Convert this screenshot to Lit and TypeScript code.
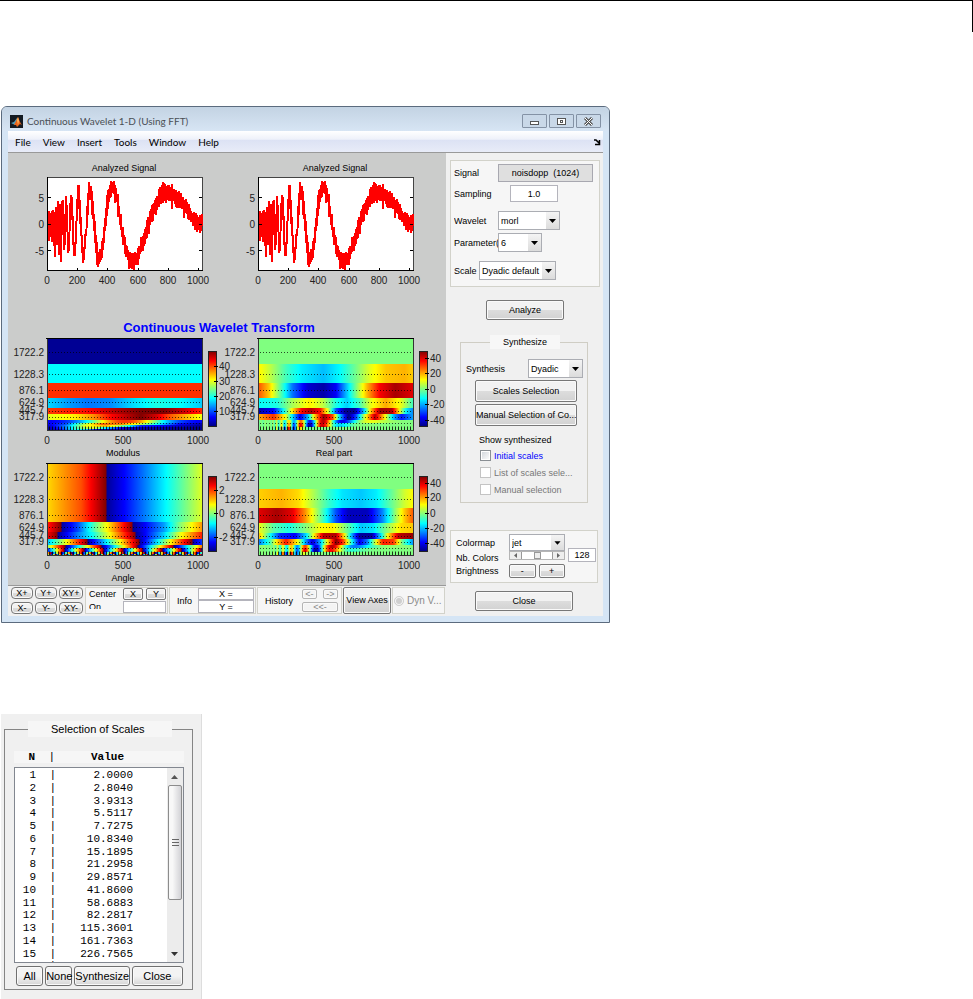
import { LitElement, html, svg, css } from "lit";
import { customElement, property } from "lit/decorators.js";

type Row = { y: number; h: number; at: (t: number) => number };

/** Jet colour map, v in 0..1. */
function jet(v: number): string {
  const ch = (c: number) =>
    Math.round(255 * Math.max(0, Math.min(1, 1.5 - Math.abs(4 * v - c))));
  return `rgb(${ch(3)},${ch(2)},${ch(1)})`;
}

/** Linear interpolation over a flat list of position, value pairs. */
function ramp(...p: number[]) {
  return (t: number) => {
    for (let i = 2; i < p.length; i += 2) {
      if (t <= p[i]) {
        const span = p[i] - p[i - 2];
        return span ? p[i - 1] + ((t - p[i - 2]) / span) * (p[i + 1] - p[i - 1]) : p[i + 1];
      }
    }
    return p[p.length - 1];
  };
}

const bump = (c: number, w: number) => (t: number) => Math.exp(-(((t - c) / w) ** 2));
const phase = (t: number) => (2 * Math.PI * 1.05) / (t + 0.05);
const A7 = bump(0.5, 0.25);
const saw = (n: number, o: number) => (t: number) => (t * n + o) % 1;

const modulus: Row[] = [
  { y: 2, h: 26, at: () => 0.02 },
  { y: 28, h: 19, at: () => 0.375 },
  { y: 47, h: 15, at: () => 0.83 },
  { y: 62, h: 10, at: ramp(0, 0.34, 0.13, 0.28, 0.26, 0.24, 0.4, 0.26, 0.55, 0.34, 0.7, 0.4, 0.85, 0.38, 1, 0.32) },
  { y: 72, h: 6, at: ramp(0, 0.82, 0.25, 0.86, 0.45, 0.95, 0.6, 1, 0.75, 1, 0.88, 0.92, 1, 0.83) },
  { y: 78, h: 6, at: ramp(0, 0.6, 0.18, 0.64, 0.3, 0.74, 0.42, 0.88, 0.6, 1, 0.7, 0.92, 0.8, 0.78, 0.92, 0.67, 1, 0.6) },
  { y: 84, h: 3, at: (t) => 0.1 + 0.72 * A7(t) },
  { y: 87, h: 2, at: ramp(0, 0.1, 0.12, 0.2, 0.22, 0.5, 0.35, 0.78, 0.48, 0.74, 0.6, 0.56, 0.75, 0.3, 0.85, 0.12, 1, 0.04) },
  { y: 89, h: 2, at: ramp(0, 0.06, 0.12, 0.25, 0.24, 0.6, 0.38, 0.7, 0.5, 0.45, 0.6, 0.16, 1, 0.02) },
  { y: 91, h: 2, at: ramp(0, 0.03, 0.1, 0.2, 0.2, 0.48, 0.3, 0.6, 0.38, 0.34, 0.5, 0.06, 1, 0.01) },
  { y: 93, h: 2, at: ramp(0, 0.03, 0.08, 0.1, 0.18, 0.4, 0.26, 0.3, 0.34, 0.04, 1, 0.01) },
];

const real: Row[] = [
  { y: 2, h: 26, at: () => 0.5 },
  { y: 28, h: 19, at: ramp(0, 0.64, 0.08, 0.56, 0.18, 0.44, 0.28, 0.36, 0.42, 0.31, 0.52, 0.37, 0.62, 0.48, 0.72, 0.6, 0.82, 0.68, 0.94, 0.7, 1, 0.67) },
  { y: 47, h: 15, at: ramp(0, 0.8, 0.07, 0.68, 0.15, 0.45, 0.22, 0.24, 0.32, 0.08, 0.42, 0.04, 0.5, 0.12, 0.57, 0.32, 0.64, 0.53, 0.7, 0.7, 0.78, 0.88, 0.88, 0.96, 1, 0.9) },
  { y: 62, h: 10, at: ramp(0, 0.38, 0.12, 0.4, 0.22, 0.54, 0.33, 0.64, 0.42, 0.56, 0.5, 0.4, 0.57, 0.33, 0.65, 0.44, 0.72, 0.6, 0.82, 0.71, 0.92, 0.6, 1, 0.42) },
  { y: 72, h: 6, at: ramp(0, 0.04, 0.1, 0.12, 0.16, 0.36, 0.22, 0.64, 0.28, 0.88, 0.34, 0.95, 0.4, 0.86, 0.45, 0.58, 0.5, 0.2, 0.56, 0.02, 0.62, 0.02, 0.68, 0.32, 0.72, 0.66, 0.78, 0.97, 0.86, 0.95, 0.91, 0.6, 0.95, 0.36, 1, 0.24) },
  { y: 78, h: 6, at: ramp(0, 0.7, 0.1, 0.83, 0.18, 0.6, 0.22, 0.35, 0.27, 0.1, 0.32, 0.3, 0.36, 0.65, 0.42, 0.98, 0.48, 0.8, 0.52, 0.35, 0.58, 0, 0.63, 0.2, 0.68, 0.55, 0.75, 0.95, 0.82, 0.6, 0.87, 0.3, 0.92, 0.14, 1, 0.3) },
  { y: 84, h: 3, at: (t) => 0.5 + 0.45 * bump(0.45, 0.25)(t) * Math.sin(phase(t)) },
  { y: 87, h: 4, at: (t) => 0.5 + 0.48 * bump(0.35, 0.18)(t) * Math.sin(phase(t)) },
  { y: 91, h: 4, at: (t) => 0.5 + 0.42 * bump(0.2, 0.08)(t) * Math.sin(phase(t)) },
];

const imaginary: Row[] = [
  { y: 2, h: 26, at: () => 0.5 },
  { y: 28, h: 19, at: ramp(0, 0.67, 0.15, 0.7, 0.26, 0.66, 0.36, 0.54, 0.45, 0.43, 0.54, 0.35, 0.66, 0.32, 0.76, 0.36, 0.86, 0.48, 0.94, 0.58, 1, 0.63) },
  { y: 47, h: 15, at: ramp(0, 0.9, 0.12, 0.96, 0.22, 0.9, 0.3, 0.74, 0.37, 0.56, 0.44, 0.38, 0.5, 0.2, 0.58, 0.06, 0.7, 0.06, 0.8, 0.26, 0.88, 0.52, 0.94, 0.68, 1, 0.8) },
  { y: 62, h: 10, at: ramp(0, 0.62, 0.1, 0.46, 0.2, 0.4, 0.3, 0.5, 0.4, 0.62, 0.48, 0.64, 0.56, 0.5, 0.66, 0.32, 0.74, 0.35, 0.82, 0.5, 0.92, 0.66, 1, 0.68) },
  { y: 72, h: 6, at: ramp(0, 0.72, 0.07, 0.42, 0.14, 0.16, 0.24, 0.12, 0.31, 0.35, 0.36, 0.64, 0.42, 0.94, 0.5, 0.95, 0.55, 0.66, 0.6, 0.3, 0.65, 0.03, 0.73, 0.03, 0.79, 0.36, 0.83, 0.62, 0.9, 0.94, 1, 0.98) },
  { y: 78, h: 6, at: ramp(0, 0.22, 0.08, 0.45, 0.12, 0.65, 0.18, 0.85, 0.26, 0.6, 0.3, 0.3, 0.35, 0.08, 0.4, 0.3, 0.44, 0.6, 0.5, 1, 0.55, 0.8, 0.6, 0.4, 0.65, 0.1, 0.7, 0.24, 0.74, 0.5, 0.8, 0.85, 0.87, 0.82, 0.92, 0.5, 1, 0.25) },
  { y: 84, h: 3, at: (t) => 0.5 + 0.45 * bump(0.45, 0.25)(t) * Math.cos(phase(t)) },
  { y: 87, h: 4, at: (t) => 0.5 + 0.48 * bump(0.38, 0.18)(t) * Math.cos(phase(t)) },
  { y: 91, h: 4, at: (t) => 0.5 + 0.42 * bump(0.2, 0.08)(t) * Math.cos(phase(t)) },
];

const angle: Row[] = [
  { y: 2, h: 59, at: ramp(0, 0.66, 0.22, 0.8, 0.38, 1, 0.38, 0.02, 0.5, 0.13, 0.75, 0.36, 1, 0.6) },
  { y: 61, h: 10, at: ramp(0, 0.84, 0.09, 1, 0.09, 0.02, 0.2, 0.2, 0.3, 0.45, 0.4, 0.66, 0.55, 1, 0.55, 0.02, 0.75, 0.28, 0.85, 0.5, 1, 0.74) },
  { y: 71, h: 7, at: ramp(0, 0.88, 0.07, 1, 0.07, 0.02, 0.2, 0.25, 0.3, 0.4, 0.4, 0.62, 0.57, 1, 0.57, 0.02, 0.75, 0.33, 0.85, 0.6, 1, 0.86) },
  { y: 78, h: 6, at: ramp(0, 0.3, 0.1, 0.55, 0.26, 1, 0.26, 0.02, 0.36, 0.3, 0.46, 0.6, 0.59, 1, 0.59, 0.02, 0.7, 0.33, 0.8, 0.65, 0.93, 1, 0.93, 0.02, 1, 0.2) },
  { y: 84, h: 3, at: saw(4.3, 0.5) },
  { y: 87, h: 4, at: saw(8, 0.1) },
  { y: 91, h: 2, at: saw(15, 0.6) },
  { y: 93, h: 2, at: saw(29, 0.3) },
];

const scaleLabels: [string, number][] = [
  ["1722.2", 16], ["1228.3", 38], ["876.1", 54], ["624.9", 66], ["445.7", 74], ["317.9", 80],
];

const plotText = css`
  :host {
    display: block;
    font-family: "Liberation Sans", Arial, sans-serif;
  }
  svg {
    display: block;
    width: 100%;
    overflow: visible;
  }
  .tick {
    font-size: 10px;
    fill: #222;
  }
  .caption {
    font-size: 9px;
    fill: #000;
  }
  .end {
    text-anchor: end;
  }
  .mid {
    text-anchor: middle;
  }
`;

@customElement("signal-plot")
export class SignalPlot extends LitElement {
  static styles = plotText;

  private trace(): string {
    let seed = 20;
    const rnd = () => {
      seed = (seed * 16807) % 2147483647;
      return seed / 2147483647;
    };
    const pts: string[] = [];
    for (let i = 0; i < 1024; i++) {
      const t = i / 1024;
      const noise = (rnd() + rnd() + rnd() + rnd() - 2) * (t < 0.1 ? 2.8 : 1.5);
      const v = 14.6 * Math.sqrt(t * (1 - t)) * Math.sin(phase(t)) + noise;
      const y = Math.max(24, Math.min(116, 70.5 - v * 5.3));
      pts.push(`${(40 + t * 154).toFixed(1)},${y.toFixed(1)}`);
    }
    return pts.join(" ");
  }

  render() {
    return html`<svg viewBox="0 0 211 151" role="img" aria-label="Analyzed signal">
      <text class="caption mid" x="116" y="17">Analyzed Signal</text>
      <rect x="39.5" y="23.5" width="155" height="93" fill="#fff" stroke="#444" />
      <polyline points=${this.trace()} fill="none" stroke="#f00" stroke-width="2" shape-rendering="crispEdges" />
      <path d="M39.5 23V117M39 116.5H195" stroke="#000" fill="none" />
      <path d="M40 43.5h3M40 70.5h3M40 96.5h3M194 43.5h-3M194 70.5h-3M194 96.5h-3M69.5 116v-2M99.5 116v-2M130.5 116v-2M160.5 116v-2M190.5 116v-2" stroke="#000" />
      <text class="tick end" x="36" y="48">5</text>
      <text class="tick end" x="36" y="74">0</text>
      <text class="tick end" x="36" y="101">-5</text>
      ${[0, 200, 400, 600, 800, 1000].map(
        (v) => svg`<text class="tick mid" x=${39 + Math.round(v * 0.151)} y="130">${v}</text>`
      )}
    </svg>`;
  }
}

@customElement("scalogram-plot")
export class ScalogramPlot extends LitElement {
  static styles = plotText;

  @property() name = "";
  @property({ attribute: false }) rows: Row[] = [];
  @property({ attribute: false }) bar: [string, number][] = [];

  render() {
    const steps = Array.from({ length: 157 }, (_, i) => i / 156);
    return html`<svg viewBox="0 0 211 124" role="img" aria-label=${this.name}>
      <defs>
        ${this.rows.map(
          (r, i) => svg`<linearGradient id=${"row" + i}>${steps.map(
            (t) => svg`<stop offset=${t} stop-color=${jet(r.at(t))}></stop>`
          )}</linearGradient>`
        )}
        <linearGradient id="bar" x1="0" y1="1" x2="0" y2="0">
          ${Array.from({ length: 17 }, (_, i) => svg`<stop offset=${i / 16} stop-color=${jet(i / 16)}></stop>`)}
        </linearGradient>
      </defs>
      ${this.rows.map(
        (r, i) => svg`<rect x="39" y=${r.y} width="156" height=${r.h} fill=${`url(#row${i})`} shape-rendering="crispEdges" />`
      )}
      ${[16, 38, 54, 66, 75, 81, 87].map(
        (y) => svg`<path d=${`M41 ${y}.5H194`} stroke="#000" stroke-opacity="0.7" stroke-dasharray="1 2" />`
      )}
      <path d="M41 92.5H194" stroke="#000" stroke-width="4" stroke-opacity="0.8" stroke-dasharray="1 2" />
      <rect x="39.5" y="2.5" width="155" height="92" fill="none" stroke="#333" />
      <path d="M38 2.5H195" stroke="#000" />
      <rect x="200.5" y="15.5" width="8" height="75" fill="url(#bar)" stroke="#222" />
      ${scaleLabels.map(([s, y]) => svg`<text class="tick end" x="36" y=${y + 4}>${s}</text>`)}
      <text class="tick mid" x="39" y="108">0</text>
      <text class="tick mid" x="115" y="108">500</text>
      <text class="tick mid" x="190" y="108">1000</text>
      <text class="caption mid" x="115" y="120">${this.name}</text>
      ${this.bar.map(([s, y]) => svg`<path d=${`M206 ${y}.5h4`} stroke="#000" /><text class="tick" x="211" y=${y + 4}>${s}</text>`)}
    </svg>`;
  }
}

@customElement("drop-down")
export class DropDown extends LitElement {
  static styles = css`
    :host {
      display: grid;
      border: 1px solid #abadb3;
      background: #fff;
      height: 19px;
      box-sizing: border-box;
    }
    select {
      grid-area: 1 / 1;
      appearance: none;
      border: 0;
      margin: 0;
      padding: 0 0 0 2px;
      background: none;
      min-width: 0;
      width: 100%;
      color: #000;
      font: 9px "Liberation Sans", Arial, sans-serif;
    }
    svg {
      grid-area: 1 / 1;
      justify-self: end;
      align-self: stretch;
      width: 13px;
      height: 100%;
      background: linear-gradient(#f4f4f4, #dcdcdc);
      pointer-events: none;
    }
  `;
  @property() value = "";
  @property() label = "";
  render() {
    return html`<select aria-label=${this.label}><option>${this.value}</option></select>
      <svg viewBox="0 0 13 17"><path d="M3 7h7L6.500 11z" /></svg>`;
  }
}

@customElement("scales-dialog")
export class ScalesDialog extends LitElement {
  static styles = css`
    :host {
      display: block;
      box-sizing: border-box;
      max-width: 201px;
      padding: 7px 8px 9px 3px;
      background: #f0f0f0;
      border-right: 1px solid #ddd;
      font: 11px "Liberation Sans", Arial, sans-serif;
    }
    fieldset {
      margin: 0;
      padding: 14px 8px 3px 9px;
      border: 1px solid #858585;
      min-width: 0;
    }
    legend {
      margin-left: 14px;
      padding: 0 27px 0 23px;
      line-height: 16px;
      background: #f6f6f6;
      white-space: nowrap;
    }
    table {
      border-collapse: collapse;
      table-layout: fixed;
      width: 118px;
      font: 11px/12px "Liberation Mono", "Courier New", monospace;
    }
    th,
    td {
      padding: 0;
      text-align: right;
    }
    .n {
      width: 21px;
    }
    .sep {
      width: 20px;
    }
    .head {
      margin: 0 0 4px 0;
      background: #f6f6f6;
    }
    .head .value {
      padding-right: 8px;
    }
    .head .sep {
      font-weight: normal;
    }
    tbody tr {
      height: 13px;
    }
    tbody tr:nth-child(4n) {
      height: 12px;
    }
    .list {
      display: flex;
      justify-content: space-between;
      height: 194px;
      border: 1px solid #828790;
      background: #fff;
      overflow: hidden;
    }
    .scroll {
      display: flex;
      flex-direction: column;
      align-items: center;
      width: 16px;
      background: #ececec;
    }
    .scroll svg {
      width: 16px;
      height: 17px;
      flex: none;
    }
    .thumb {
      display: flex;
      align-items: center;
      justify-content: center;
      box-sizing: border-box;
      width: 14px;
      height: 115px;
      border: 1px solid #8c8c8c;
      border-radius: 2px;
      background: linear-gradient(90deg, #f8f8f8 30%, #d2d2d6);
    }
    .grip {
      width: 7px;
      height: 7px;
      background: repeating-linear-gradient(#666 0 1px, transparent 1px 3px);
    }
    .space {
      flex: 1;
    }
    .buttons {
      display: grid;
      grid-template-columns: 27fr 27fr 55fr 51fr;
      gap: 2px;
      margin: 3px 1px 0 2px;
    }
    button {
      height: 20px;
      min-width: 0;
      padding: 0;
      border: 1px solid #707070;
      border-radius: 3px;
      background: linear-gradient(#f3f3f3 50%, #d6d6d6);
      box-shadow: inset 0 0 0 1px #fafafa;
      font: inherit;
      white-space: nowrap;
    }
  `;

  private values = [
    "2.0000", "2.8040", "3.9313", "5.5117", "7.7275", "10.8340", "15.1895", "21.2958",
    "29.8571", "41.8600", "58.6883", "82.2817", "115.3601", "161.7363", "226.7565", "317.9156",
  ];

  render() {
    return html`<fieldset>
      <legend>Selection of Scales</legend>
      <div class="head">
        <table>
          <thead>
            <tr><th class="n">N</th><th class="sep">|</th><th class="value">Value</th></tr>
          </thead>
        </table>
      </div>
      <div class="list">
        <table>
          <tbody>
            ${this.values.map((v, i) => html`<tr><td class="n">${i + 1}</td><td class="sep">|</td><td>${v}</td></tr>`)}
          </tbody>
        </table>
        <div class="scroll">
          <svg viewBox="0 0 16 17"><path d="M4 11h7L7.500 7z" fill="#555" /></svg>
          <div class="thumb"><div class="grip"></div></div>
          <div class="space"></div>
          <svg viewBox="0 0 16 17"><path d="M4 7h7L7.500 11z" fill="#333" /></svg>
        </div>
      </div>
      <div class="buttons">
        <button>All</button><button>None</button><button>Synthesize</button><button>Close</button>
      </div>
    </fieldset>`;
  }
}

@customElement("app-root")
export class AppRoot extends LitElement {
  static styles = css`
    :host {
      display: block;
      background: #fff;
      color: #000;
      font: 9px/12px "Liberation Sans", Arial, sans-serif;
    }
    .rule {
      box-sizing: border-box;
      height: 32px;
      border-top: 1px solid #000;
      border-right: 1px solid #000;
    }
    .window {
      box-sizing: border-box;
      max-width: 609px;
      margin: 74px 0 0 1px;
      padding: 0 6px 6px;
      border: 1px solid #5b6b7e;
      border-radius: 6px 6px 0 0;
      background: #d5e5f5;
    }
    .titlebar {
      display: flex;
      align-items: center;
      height: 24px;
      margin: 0 -6px;
      padding: 4px 8px 0 8px;
      box-sizing: border-box;
      border-radius: 5px 5px 0 0;
      background: linear-gradient(#c3d3e3, #d7e5f4);
      color: #4a4f55;
      font: 10px/12px Lato, "Open Sans", sans-serif;
    }
    .logo {
      width: 13px;
      height: 13px;
      margin-right: 4px;
    }
    h1 {
      flex: 1;
      margin: 0;
      font: inherit;
    }
    .caps {
      display: flex;
      gap: 2px;
    }
    .caps button {
      display: grid;
      place-items: center;
      width: 25px;
      height: 14px;
      padding: 0;
      border: 1px solid #8492a5;
      border-radius: 1px;
      background: #c9d8e8;
    }
    .caps svg {
      width: 11px;
      height: 9px;
    }
    .menubar {
      display: flex;
      align-items: center;
      gap: 12px;
      height: 22px;
      box-sizing: border-box;
      padding: 0 2px 0 7px;
      border-bottom: 1px solid #999;
      background: linear-gradient(#fff, #eef1fa 40%, #dce2f4 42%, #e8ecf8);
      font: 10px/12px Lato, "Open Sans", sans-serif;
    }
    .menubar button {
      padding: 0;
      border: 0;
      background: none;
      font: inherit;
    }
    .dock {
      width: 8px;
      height: 8px;
      margin-left: auto;
    }
    .body {
      display: grid;
      grid-template-columns: minmax(0, 438fr) minmax(0, 157fr);
      background: #f0f0f0;
    }
    .figure {
      padding: 1px 16px 0 0;
      background: #cbcccb;
      border-bottom: 1px solid #999;
    }
    .plots {
      display: grid;
      grid-template-columns: 1fr 1fr;
      row-gap: 1px;
    }
    h2 {
      margin: 14px 0 0;
      text-align: center;
      color: #00f;
      font: bold 13px/17px "Liberation Sans", Arial, sans-serif;
    }
    button,
    input {
      box-sizing: border-box;
      font: inherit;
      margin: 0;
      color: inherit;
    }
    .btn {
      padding: 0;
      border: 1px solid #777;
      border-radius: 2px;
      background: linear-gradient(#f2f2f2 48%, #dddddd 50%, #d2d2d2);
      box-shadow: inset 0 0 0 1px #fafafa;
      white-space: nowrap;
      line-height: 9px;
    }
    .btn[disabled] {
      border-color: #b5b5b5;
      background: #f4f4f4;
      color: #888;
    }
    .field {
      padding: 0;
      border: 1px solid #b4b4bc;
      background: #fff;
      text-align: center;
      min-width: 0;
    }
    .tools {
      display: flex;
      gap: 1px;
      height: 30px;
      padding: 1px 1px 2px 3px;
      box-sizing: border-box;
      background: #f0f0f0;
    }
    .zoom {
      display: grid;
      grid-template-columns: 22px 22px 24px;
      gap: 3px 2px;
      margin-right: 1px;
    }
    .zoom .btn {
      border-radius: 4px;
    }
    .box {
      box-sizing: border-box;
      border: 1px solid #d2d2ca;
      background: #f6f6f6;
    }
    .center {
      display: grid;
      grid-template-columns: 31px 20px 20px;
      grid-template-rows: 12px 12px;
      gap: 1px 3px;
      width: 83px;
      padding: 0 1px 0 3px;
    }
    .center .field {
      grid-column: 2 / 4;
    }
    .lower {
      height: 8px;
      overflow: hidden;
    }
    .info {
      display: grid;
      grid-template-columns: 21px 56px;
      grid-template-rows: 12px 13px;
      width: 87px;
      padding-left: 7px;
    }
    .info span,
    .history span {
      grid-row: 1 / 3;
      align-self: center;
    }
    .history {
      display: grid;
      grid-template-columns: 31px 15px 15px;
      grid-template-rows: 10px 10px;
      gap: 3px 6px;
      width: 85px;
      padding: 1px 3px 0 7px;
    }
    .history .wide {
      grid-column: 2 / 4;
    }
    .axes {
      flex: none;
      width: 48px;
    }
    .dyn {
      display: flex;
      align-items: center;
      gap: 3px;
      flex: 1;
      padding-left: 1px;
      color: #8a8a8a;
      font-size: 10px;
      white-space: nowrap;
    }
    .dyn input {
      width: 10px;
      height: 10px;
    }
    .side {
      padding: 7px 3px 0 4px;
    }
    .params {
      padding: 3px 6px 6px 3px;
    }
    .row {
      display: flex;
      align-items: center;
      margin-top: 3px;
    }
    .row:first-child {
      margin-top: 0;
    }
    .row.spaced {
      margin-top: 9px;
    }
    .row label,
    .row .key {
      flex: none;
      width: 44px;
      overflow: hidden;
      white-space: nowrap;
    }
    .signal {
      flex: 1;
      box-sizing: border-box;
      height: 18px;
      border: 1px solid #a8a8b0;
      background: #dfdfdf;
      text-align: center;
      line-height: 16px;
    }
    .sampling {
      width: 48px;
      height: 17px;
      margin-left: 12px;
    }
    .wide-list {
      width: 62px;
    }
    .small-list {
      width: 44px;
    }
    .row .short {
      width: 25px;
    }
    .scale-list {
      width: 77px;
    }
    .analyze {
      display: block;
      width: 78px;
      height: 20px;
      margin: 13px auto 0 36px;
    }
    .synth {
      margin: 15px 12px 0 10px;
      padding: 7px 4px 4px 5px;
      border: 1px solid #cfcdc4;
      min-width: 0;
    }
    .synth legend {
      margin-left: 24px;
      padding: 0 13px;
      line-height: 14px;
      background: #f7f7f7;
    }
    .synth .row {
      justify-content: space-between;
    }
    .dyadic {
      width: 55px;
    }
    .block {
      display: block;
      width: 102px;
      height: 22px;
      margin: 2px 0 0 9px;
      overflow: hidden;
    }
    .show {
      margin: 8px 0 1px 13px;
    }
    .check {
      display: flex;
      align-items: center;
      gap: 3px;
      height: 17px;
      margin-left: 14px;
      color: #777;
      white-space: nowrap;
    }
    .check.on {
      color: #00f;
    }
    .check input {
      appearance: none;
      width: 11px;
      height: 11px;
      border: 1px solid #c4c4c4;
      background: #fff;
    }
    .check.on input {
      border-color: #8a8f94;
      background: linear-gradient(135deg, #cfd4da, #fff);
      box-shadow: inset 0 0 0 1px #fff;
    }
    .colors {
      display: grid;
      grid-template-columns: 50px 56px 28px;
      grid-template-rows: 17px 13px 14px;
      column-gap: 3px;
      margin: 27px 2px 0 0;
      padding: 3px 0 4px 5px;
      white-space: nowrap;
    }
    .colors label,
    .colors .key {
      grid-column: 1;
      align-self: center;
    }
    .colors drop-down {
      height: 17px;
    }
    .slider {
      display: flex;
      height: 9px;
      border: 1px solid #b5b5b5;
      box-sizing: border-box;
    }
    .slider button {
      display: grid;
      place-items: center;
      width: 11px;
      height: 7px;
      padding: 0;
      border: 0;
      background: #eee;
    }
    .slider svg {
      width: 3px;
      height: 5px;
    }
    .slider input {
      appearance: none;
      flex: 1;
      min-width: 0;
      height: 7px;
      background: #fff;
      border: 1px solid #999;
      border-width: 0 1px;
    }
    .slider input::-webkit-slider-thumb {
      appearance: none;
      width: 7px;
      height: 7px;
      border: 1px solid #999;
      background: #eee;
    }
    .nb {
      height: 14px;
      margin-top: -3px;
    }
    .pair {
      display: grid;
      grid-template-columns: 1fr 1fr;
      gap: 3px;
    }
    .close {
      display: block;
      width: 98px;
      height: 20px;
      margin: 8px 0 0 25px;
    }
    scales-dialog {
      margin: 91px 0 0 1px;
    }
  `;

  render() {
    return html`
      <div class="rule"></div>
      <main class="window">
        <header class="titlebar">
          <svg class="logo" viewBox="0 0 13 13">
            <rect width="13" height="13" fill="#131a22" />
            <path d="M1 8l3-1 3-4 1 2-3 5z" fill="#4aa0c0" />
            <path d="M4 10L8 2c1 2 2 6 4 8l-2-1-3 3-1-2z" fill="#e8641b" />
            <path d="M7 5l1-3 1 4-1 4z" fill="#ffb45a" />
          </svg>
          <h1>Continuous Wavelet 1-D (Using FFT)</h1>
          <div class="caps">
            <button aria-label="Minimize"><svg viewBox="0 0 11 9"><rect x="1.500" y="4.500" width="8" height="3" fill="#fff" stroke="#555" /></svg></button>
            <button aria-label="Maximize"><svg viewBox="0 0 11 9"><rect x="1.500" y="1.500" width="8" height="6" fill="#fff" stroke="#555" /><rect x="4.500" y="3.500" width="2" height="2" fill="#fff" stroke="#555" /></svg></button>
            <button aria-label="Close window"><svg viewBox="0 0 11 9"><path d="M2 1l7 7M9 1L2 8" stroke="#555" stroke-width="3" /><path d="M2 1l7 7M9 1L2 8" stroke="#fff" stroke-width="1" /></svg></button>
          </div>
        </header>
        <nav class="menubar">
          ${["File", "View", "Insert", "Tools", "Window", "Help"].map((m) => html`<button>${m}</button>`)}
          <svg class="dock" viewBox="0 0 8 8"><path d="M1 2h2l3 3M6.500 2v4.500H2" fill="none" stroke="#000" stroke-width="1.500" /></svg>
        </nav>
        <div class="body">
          <div>
            <section class="figure">
              <div class="plots"><signal-plot></signal-plot><signal-plot></signal-plot></div>
              <h2>Continuous Wavelet Transform</h2>
              <div class="plots">
                <scalogram-plot name="Modulus" .rows=${modulus} .bar=${[["40", 30], ["30", 45], ["20", 60], ["10", 75]]}></scalogram-plot>
                <scalogram-plot name="Real part" .rows=${real} .bar=${[["40", 22], ["20", 37], ["0", 53], ["-20", 68], ["-40", 84]]}></scalogram-plot>
                <scalogram-plot name="Angle" .rows=${angle} .bar=${[["2", 29], ["0", 52], ["-2", 76]]}></scalogram-plot>
                <scalogram-plot name="Imaginary part" .rows=${imaginary} .bar=${[["40", 22], ["20", 36], ["0", 52], ["-20", 67], ["-40", 82]]}></scalogram-plot>
              </div>
            </section>
            <section class="tools">
              <div class="zoom">
                ${["X+", "Y+", "XY+", "X-", "Y-", "XY-"].map((b) => html`<button class="btn">${b}</button>`)}
              </div>
              <div class="box center">
                <span>Center</span><button class="btn">X</button><button class="btn">Y</button>
                <span class="lower">On</span><input class="field" aria-label="Center on" />
              </div>
              <div class="box info">
                <span>Info</span>
                <input class="field" aria-label="X position" value="X =" />
                <input class="field" aria-label="Y position" value="Y =" />
              </div>
              <div class="box history">
                <span>History</span>
                <button class="btn" disabled>&lt;-</button><button class="btn" disabled>-&gt;</button>
                <button class="btn wide" disabled>&lt;&lt;-</button>
              </div>
              <button class="btn axes">View Axes</button>
              <label class="box dyn"><input type="radio" checked disabled />Dyn V...</label>
            </section>
          </div>
          <aside class="side">
            <div class="box params">
              <div class="row"><span class="key">Signal</span><output class="signal">noisdopp&nbsp; (1024)</output></div>
              <div class="row"><label for="sampling">Sampling</label><input id="sampling" class="field sampling" value="1.0" /></div>
              <div class="row spaced"><span class="key">Wavelet</span><drop-down class="wide-list" label="Wavelet" value="morl"></drop-down></div>
              <div class="row"><span class="key">Parameter(</span><drop-down class="small-list" label="Parameter" value="6"></drop-down></div>
              <div class="row spaced"><span class="key short">Scale</span><drop-down class="scale-list" label="Scale" value="Dyadic default"></drop-down></div>
            </div>
            <button class="btn analyze">Analyze</button>
            <fieldset class="synth">
              <legend>Synthesize</legend>
              <div class="row"><span class="key">Synthesis</span><drop-down class="dyadic" label="Synthesis" value="Dyadic"></drop-down></div>
              <button class="btn block">Scales Selection</button>
              <button class="btn block">Manual Selection of Co...</button>
              <div class="show">Show synthesized</div>
              <label class="check on"><input type="checkbox" />Initial scales</label>
              <label class="check"><input type="checkbox" disabled />List of scales sele...</label>
              <label class="check"><input type="checkbox" disabled />Manual selection</label>
            </fieldset>
            <div class="box colors">
              <span class="key">Colormap</span>
              <drop-down label="Colormap" value="jet"></drop-down>
              <label for="nb">Nb. Colors</label>
              <div class="slider">
                <button aria-label="Fewer colors"><svg viewBox="0 0 3 5"><path d="M3 0v5L0 2.500z" fill="#666" /></svg></button>
                <input type="range" aria-label="Number of colors" />
                <button aria-label="More colors"><svg viewBox="0 0 3 5"><path d="M0 0v5l3-2.500z" fill="#666" /></svg></button>
              </div>
              <input id="nb" class="field nb" value="128" />
              <span class="key">Brightness</span>
              <div class="pair"><button class="btn">-</button><button class="btn">+</button></div>
            </div>
            <button class="btn close">Close</button>
          </aside>
        </div>
      </main>
      <scales-dialog></scales-dialog>
    `;
  }
}
